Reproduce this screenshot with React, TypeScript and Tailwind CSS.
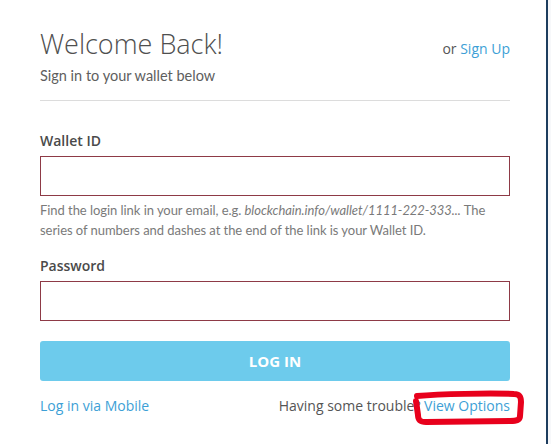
import React from 'react';

const montserrat = { fontFamily: '"Open Sans", "Liberation Sans", sans-serif' };

export default function App() {
  return (
    <div className="relative flex h-[444px] w-[551px] bg-[#f7f8fa]">
      <div className="h-full w-[548px] border-r-2 border-[#1d3d5e] bg-white pl-10 pr-9 pt-[26px]">
        {/* Header */}
        <div className="flex items-baseline justify-between">
          <h1 className="text-[27px] font-light leading-[36px] text-[#4f4f4f]" style={montserrat}>
            Welcome Back!
          </h1>
          <span className="text-[14px] text-[#555]" style={montserrat}>
            or <span className="text-[#3d9fd6]">Sign Up</span>
          </span>
        </div>
        <p className="mt-1 font-['Lato',sans-serif] text-[14.5px] leading-5 text-[#5e5e5e]">
          Sign in to your wallet below
        </p>
        <div className="mt-[14px] h-px bg-[#dcdcdc]" />

        {/* Wallet ID */}
        <label className="mt-[30px] block text-[14px] font-semibold leading-5 text-[#4a4a4a]" style={montserrat}>
          Wallet ID
        </label>
        <div className="mt-[5px] h-10 border border-[#8e3a46] bg-white" />
        <p className="mt-1 whitespace-nowrap font-['Lato',sans-serif] text-[13px] leading-5 tracking-[-0.05px] text-[#7a7a7a]">
          Find the login link in your email, e.g. <i>blockchain.info/wallet/1111-222-333...</i> The
          <br />
          series of numbers and dashes at the end of the link is your Wallet ID.
        </p>

        {/* Password */}
        <label className="mt-4 block text-[14px] font-semibold leading-5 text-[#4a4a4a]" style={montserrat}>
          Password
        </label>
        <div className="mt-[5px] h-10 border border-[#8e3a46] bg-white" />

        <button
          className="mt-5 flex h-10 w-full items-center justify-center rounded-[3px] bg-[#6dcbec] text-[15px] font-bold text-white"
          style={montserrat}
        >
          LOG IN
        </button>

        {/* Footer links */}
        <div className="mt-[15px] flex items-center justify-between text-[14px] leading-5" style={montserrat}>
          <span className="text-[#3d9fd6]">Log in via Mobile</span>
          <span className="text-[#555]">
            Having some trouble? <span className="text-[#3d9fd6]">View Options</span>
          </span>
        </div>
      </div>

      {/* red annotation */}
      <svg className="absolute left-[410px] top-[389px]" width="116" height="38" viewBox="0 0 116 38">
        <path
          d="M7 7 C30 5 80 4 104 5 C110 5 111 8 111 13 L110 27 C110 31 107 32 100 32 L16 33 C10 33 8 31 8 26 L6 12"
          fill="none"
          stroke="#e8001c"
          strokeWidth="6"
          strokeLinecap="round"
          strokeLinejoin="round"
        />
      </svg>
    </div>
  );
}
